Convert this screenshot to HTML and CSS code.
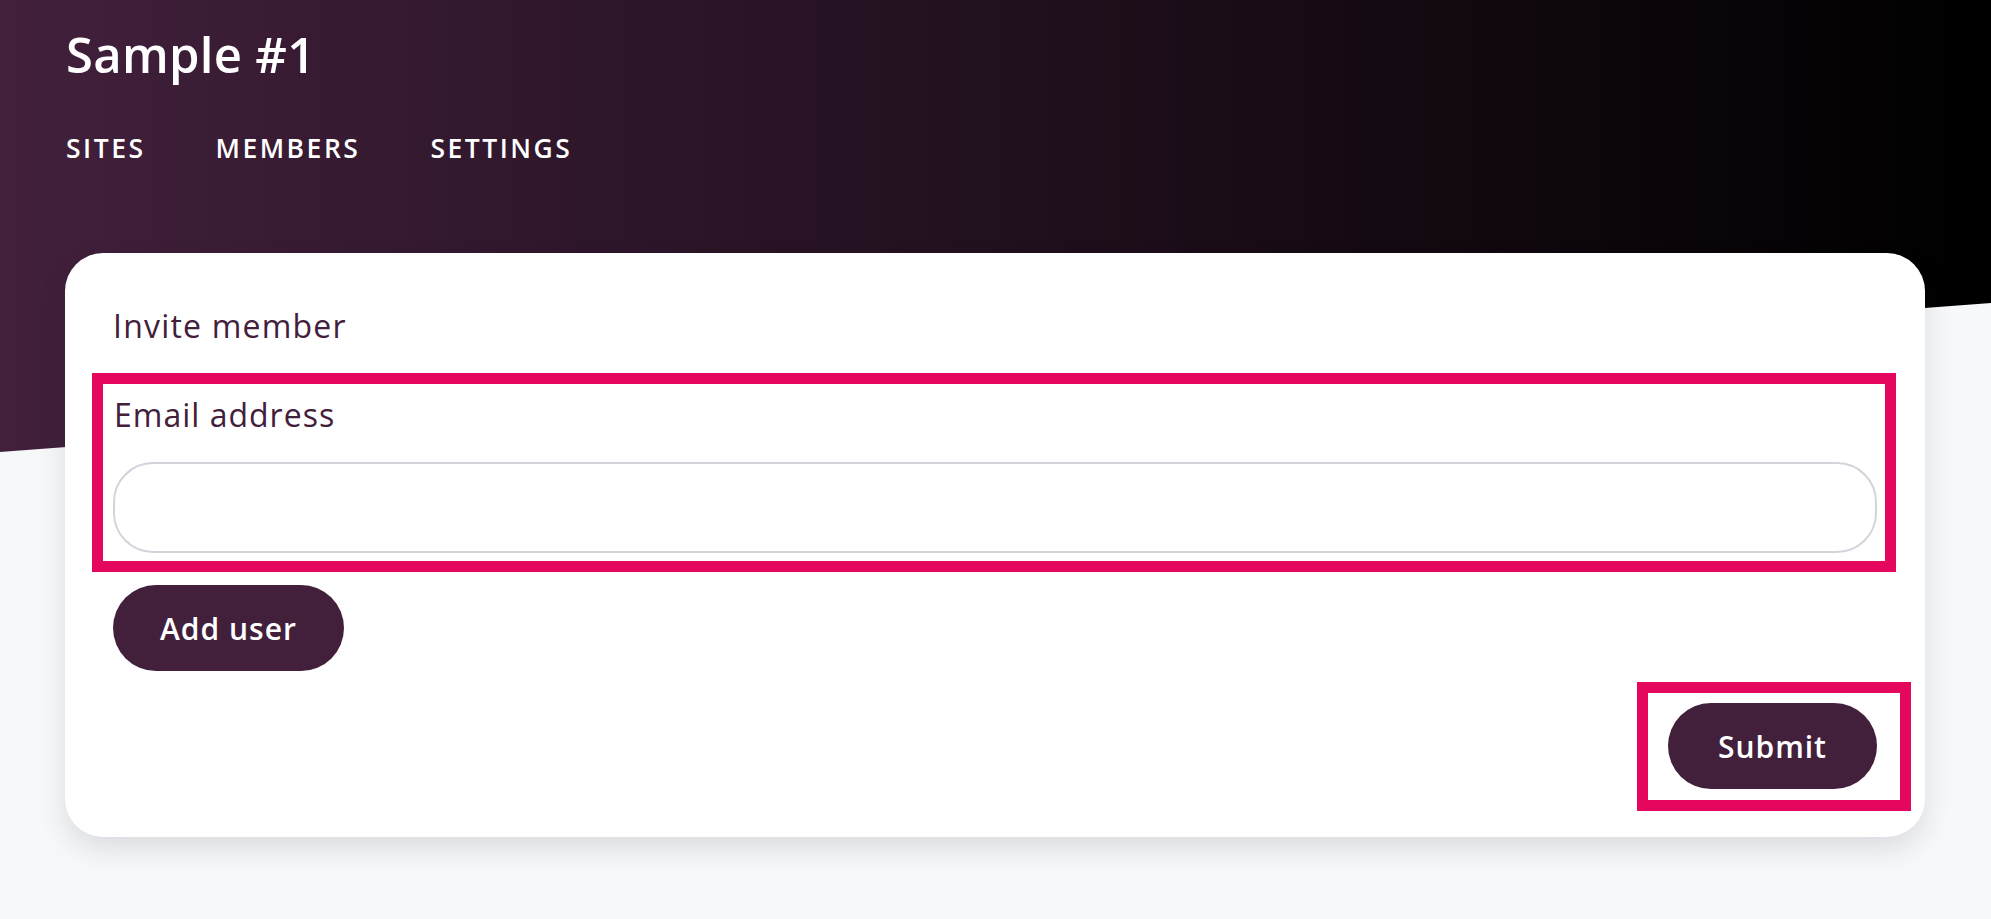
FILE: index.html
```html
<!DOCTYPE html>
<html lang="en">
<head>
<meta charset="utf-8">
<title>Sample #1 – Members</title>
<link rel="stylesheet" href="styles.css">
</head>
<body>
  <header class="hero">
    <h1 class="hero-title">Sample #1</h1>
    <nav class="hero-nav">
      <a class="nav-link" href="#">SITES</a>
      <a class="nav-link" href="#">MEMBERS</a>
      <a class="nav-link" href="#">SETTINGS</a>
    </nav>
  </header>
  <main class="content">
    <form class="card">
      <h2 class="card-title">Invite member</h2>
      <div class="field-group">
        <label class="field-label" for="email">Email address</label>
        <input class="field-input" id="email" type="email">
      </div>
      <button class="btn btn-add" type="button">Add user</button>
      <div class="submit-box">
        <button class="btn btn-submit" type="submit">Submit</button>
      </div>
    </form>
  </main>
</body>
</html>
```

FILE: styles.css
```css
* { box-sizing: border-box; }

html, body {
  margin: 0;
  padding: 0;
}

body {
  background: #f7f8fa;
  font-family: "Open Sans", "Noto Sans", sans-serif;
  color: #42203c;
  min-height: 919px;
}

.hero {
  height: 452px;
  padding: 24px 66px 0;
  background: linear-gradient(90deg, #42203c 0%, #000000 100%);
  clip-path: polygon(0 0, 100% 0, 100% 303px, 0 100%);
  color: #ffffff;
}

.hero-title {
  margin: 0;
  font-size: 49px;
  line-height: 60px;
  font-weight: 600;
  letter-spacing: 0.3px;
}

.hero-nav {
  display: flex;
  margin-top: 46px;
}

.nav-link {
  color: #ffffff;
  text-decoration: none;
  font-size: 26.5px;
  line-height: 36px;
  font-weight: 600;
  letter-spacing: 2.5px;
}

.nav-link:nth-child(2) { margin-left: 70px; }
.nav-link:nth-child(3) { margin-left: 70px; }

.content {
  position: relative;
  z-index: 1;
  margin-top: -199px;
  padding: 0 66px 40px 65px;
}

.card {
  display: flex;
  flex-direction: column;
  align-items: flex-start;
  background: #ffffff;
  border-radius: 38px;
  padding: 49px 48px 48px;
  box-shadow: 0 12px 28px rgba(30, 35, 50, 0.13);
}

.card-title {
  margin: 0;
  font-size: 32px;
  line-height: 48px;
  font-weight: 400;
  letter-spacing: 1.2px;
}

.field-group {
  align-self: stretch;
  display: flex;
  flex-direction: column;
  margin: 23px -19px 0 -21px;
  padding: 7px 8px 8px 10px;
  border: 11px solid #e4075d;
}

.field-label {
  font-size: 32px;
  line-height: 48px;
  letter-spacing: 1px;
  padding-left: 1px;
}

.field-input {
  margin-top: 23px;
  height: 91px;
  width: 100%;
  border: 2px solid #d1d5db;
  border-radius: 40px;
  background: #ffffff;
  font: inherit;
  font-size: 28px;
  padding: 0 32px;
  outline: none;
}

.btn {
  display: inline-flex;
  align-items: center;
  justify-content: center;
  height: 86px;
  padding: 0 48px;
  border: 0;
  border-radius: 43px;
  background: #42203c;
  color: #ffffff;
  font-family: inherit;
  font-size: 30px;
  font-weight: 600;
  letter-spacing: 1px;
  cursor: pointer;
}

.btn-add {
  margin-top: 13px;
  padding: 0 47px;
}

.btn-submit {
  padding: 0 50px;
}

.submit-box {
  align-self: flex-end;
  margin: 11px -34px -22px 0;
  padding: 10px 23px 11px 20px;
  border: 11px solid #e4075d;
}
```
